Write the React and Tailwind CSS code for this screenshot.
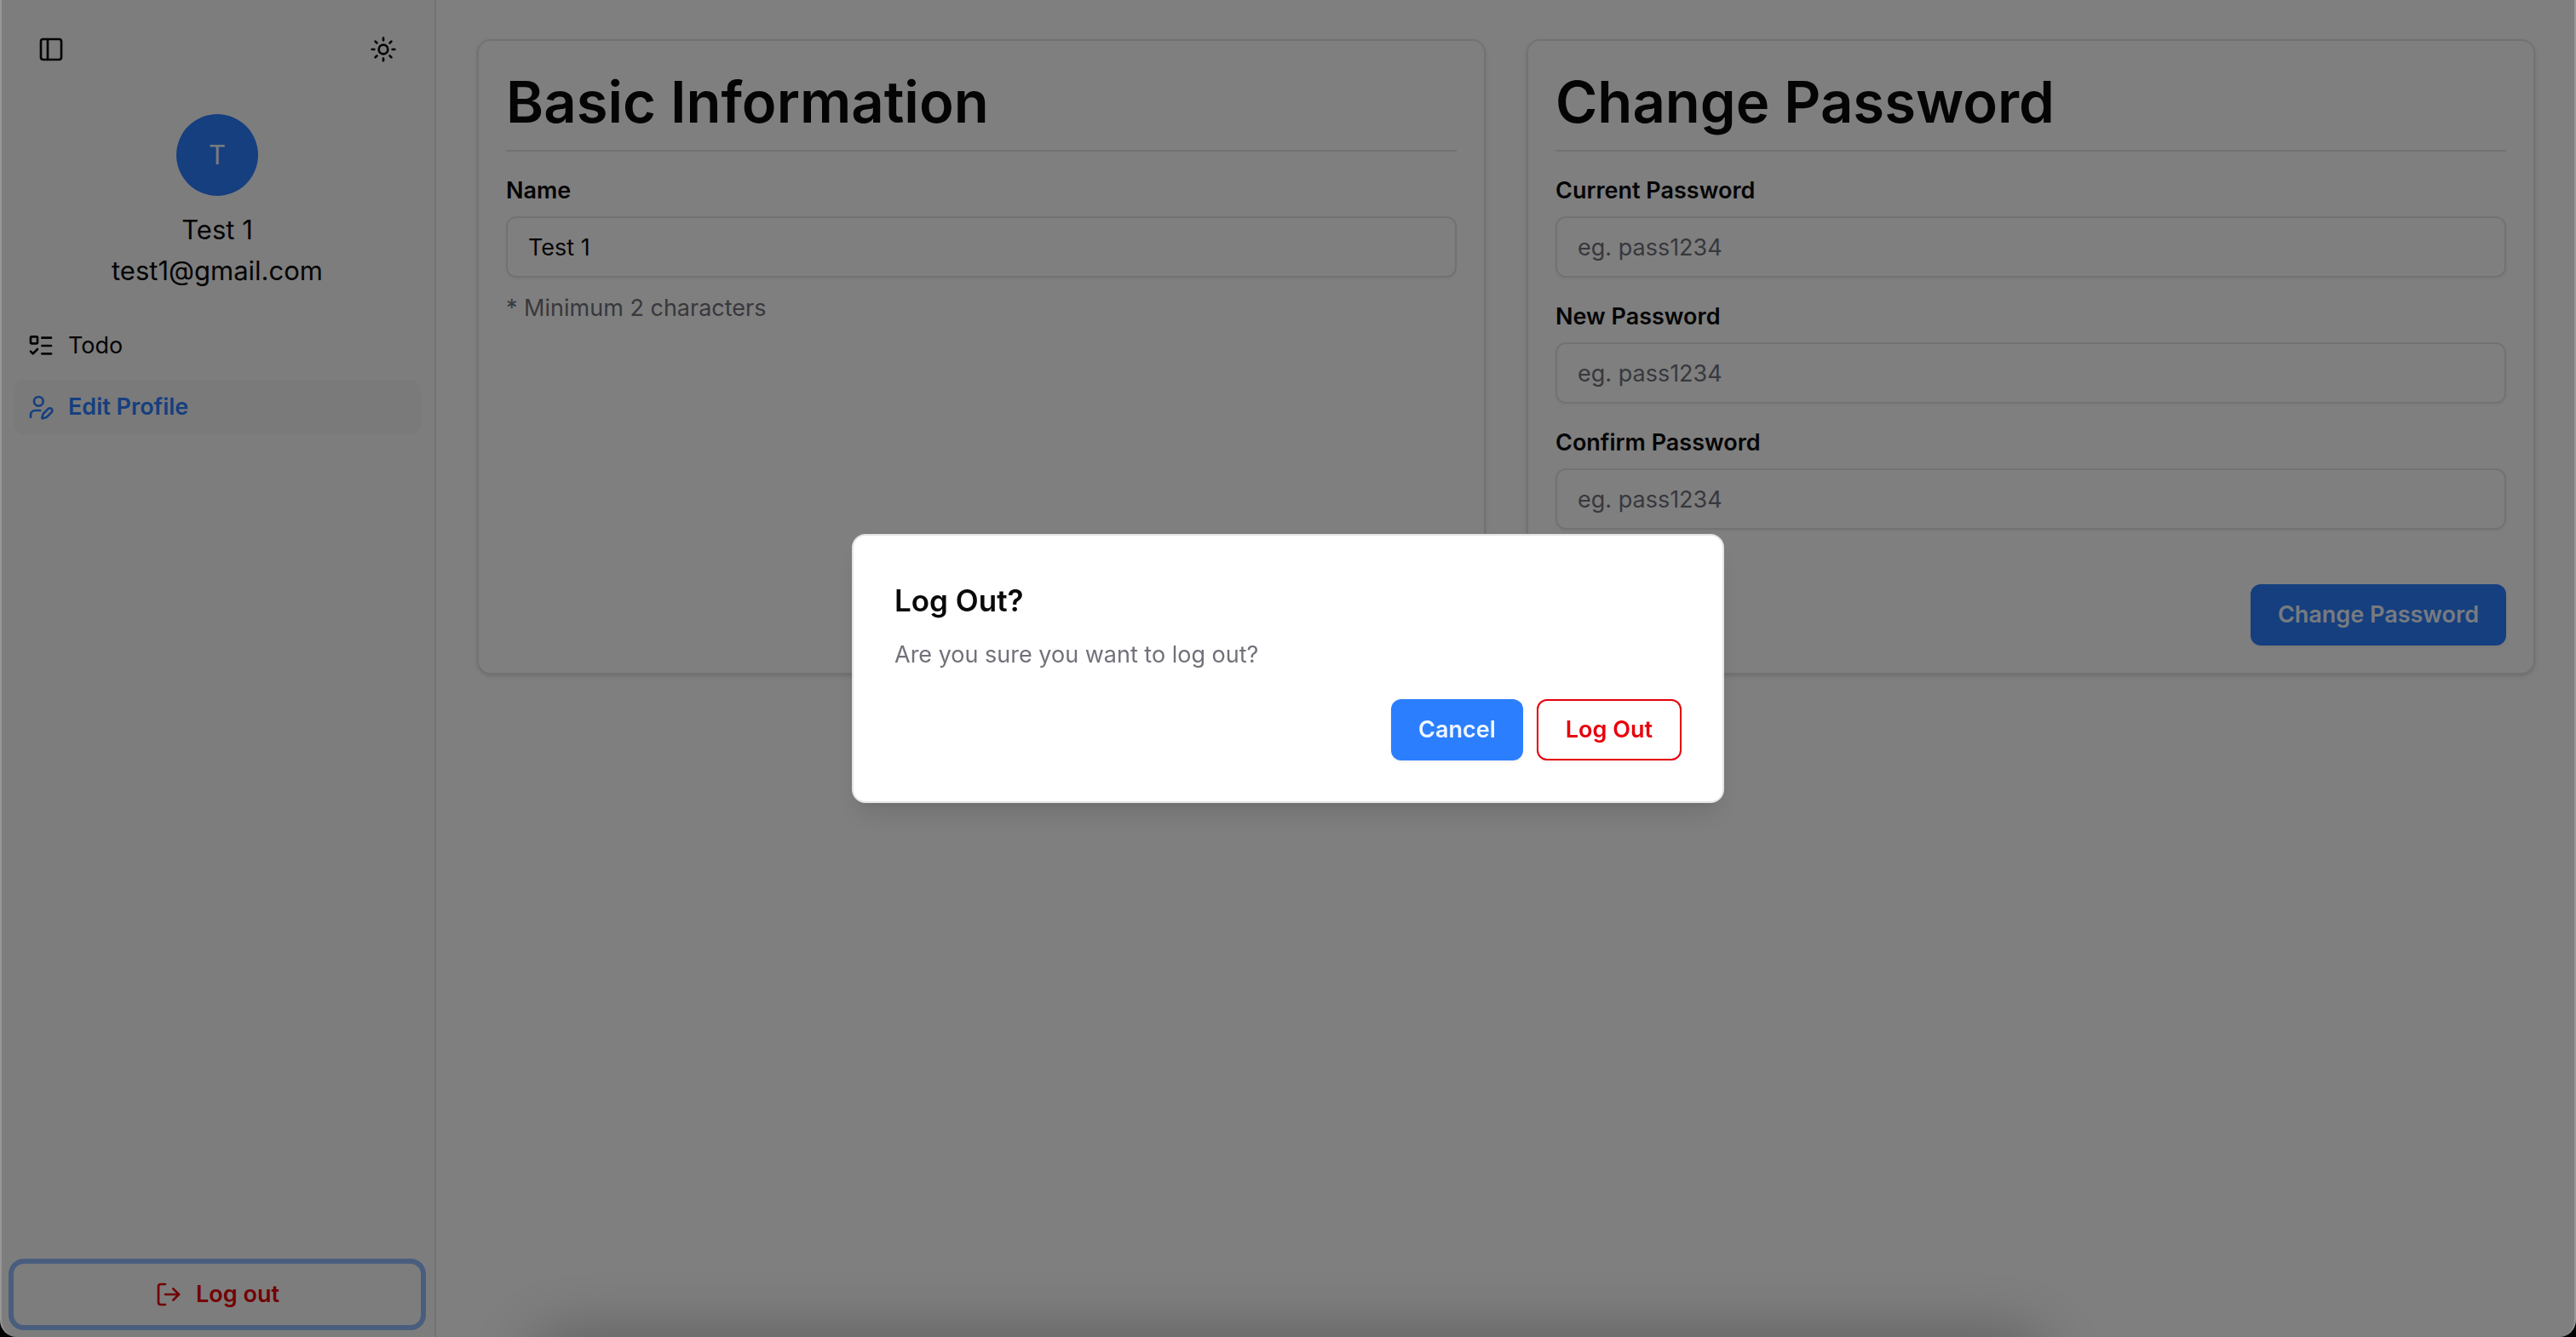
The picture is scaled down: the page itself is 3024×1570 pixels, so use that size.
import { ListTodo, LogOut, PanelLeft, Sun, UserPen } from "lucide-react";

const buttonBase =
  "flex h-[72px] items-center justify-center rounded-[12px] text-[27px] font-semibold shadow-[0_2px_4px_rgba(0,0,0,0.05)]";

function Sidebar() {
  return (
    <aside className="flex w-[512px] shrink-0 flex-col border-r-2 border-zinc-200 bg-neutral-50 px-4 pb-[14px] pt-[26px]">
      <div className="flex items-center justify-between px-3">
        <button type="button" aria-label="Toggle sidebar" className="flex size-16 items-center justify-center">
          <PanelLeft className="size-8" />
        </button>
        <button type="button" aria-label="Toggle theme" className="flex size-16 items-center justify-center">
          <Sun className="size-8" />
        </button>
      </div>

      <div className="mt-11 flex flex-col items-center text-[31px] leading-[48px]">
        <div className="mb-4 flex size-24 items-center justify-center rounded-full bg-[#2b7fff] text-blue-50">T</div>
        <p>Test 1</p>
        <p>test1@gmail.com</p>
      </div>

      <nav className="mt-8 flex flex-col gap-2 text-[27px]">
        <a href="#todo" className="flex h-16 items-center gap-4 rounded-[12px] px-4">
          <ListTodo className="size-8" />
          Todo
        </a>
        <a href="#profile" className="flex h-16 items-center gap-4 rounded-[12px] bg-zinc-100 px-4 font-semibold text-[#2b7fff]">
          <UserPen className="size-8" />
          Edit Profile
        </a>
      </nav>

      <button
        type="button"
        className="mt-auto flex h-[72px] items-center justify-center gap-4 rounded-[12px] text-[27px] font-semibold text-[#e7000b] ring-6 ring-[#2b7fff]/50"
      >
        <LogOut className="size-8" />
        Log out
      </button>
    </aside>
  );
}

function Card({ title, children }) {
  return (
    <section className="flex flex-1 flex-col gap-8 rounded-[16px] border-2 border-zinc-200 bg-white p-8 shadow-[0_2px_6px_rgba(0,0,0,0.1),0_2px_4px_-2px_rgba(0,0,0,0.1)]">
      <h1 className="border-b-2 border-zinc-200 pb-4 text-[67px] font-semibold leading-[80px]">{title}</h1>
      {children}
    </section>
  );
}

function Field({ id, label, hint, ...inputProps }) {
  return (
    <div className="flex flex-col gap-4">
      <label htmlFor={id} className="text-[27px] font-semibold leading-[28px]">
        {label}
      </label>
      <input
        id={id}
        className="h-[72px] w-full rounded-[12px] border-2 border-zinc-200 px-6 text-[27px] shadow-[0_2px_4px_rgba(0,0,0,0.05)] outline-none placeholder:text-[#71717b]"
        {...inputProps}
      />
      {hint && <p className="text-[27px] leading-[40px] text-[#71717b]">{hint}</p>}
    </div>
  );
}

function LogOutDialog() {
  return (
    <div className="fixed inset-0 flex items-center justify-center bg-black/50">
      <div
        role="alertdialog"
        aria-labelledby="dialog-title"
        aria-describedby="dialog-text"
        className="flex w-full max-w-[1024px] flex-col gap-8 rounded-[16px] border-2 border-zinc-200 bg-white p-12 shadow-[0_20px_30px_-6px_rgba(0,0,0,0.1),0_8px_12px_-8px_rgba(0,0,0,0.1)]"
      >
        <div className="flex flex-col gap-4">
          <h2 id="dialog-title" className="text-[35px] font-semibold leading-[56px]">
            Log Out?
          </h2>
          <p id="dialog-text" className="text-[27px] leading-[40px] text-[#71717b]">
            Are you sure you want to log out?
          </p>
        </div>
        <div className="flex justify-end gap-4">
          <button type="button" className={`${buttonBase} bg-[#2b7fff] px-8 text-blue-50`}>
            Cancel
          </button>
          <button type="button" className={`${buttonBase} border-2 border-[#e7000b] bg-white px-8 text-[#e7000b]`}>
            Log Out
          </button>
        </div>
      </div>
    </div>
  );
}

// Window edge: thin light sides, rounded bottom corners and the dock's soft shadow.
function WindowFrame() {
  return (
    <div aria-hidden="true" className="pointer-events-none fixed inset-0 overflow-hidden">
      <div className="absolute inset-x-0 top-full mx-auto h-20 w-[59%] rounded-[40px] shadow-[0_0_80px_rgba(0,0,0,0.3)]" />
      <div className="absolute inset-0 rounded-b-[20px] border-x-2 border-white/20 shadow-[0_0_0_20px_black]" />
    </div>
  );
}

export default function App() {
  return (
    <div className="font-['Inter',sans-serif] text-zinc-950">
      <div className="flex min-h-screen bg-white">
        <Sidebar />
        <main className="flex flex-1 items-start px-12 pt-[46px]">
          <div className="flex flex-1 items-stretch gap-12">
            <Card title="Basic Information">
              <Field id="name" label="Name" defaultValue="Test 1" hint="* Minimum 2 characters" />
            </Card>
            <Card title="Change Password">
              <Field id="current" label="Current Password" placeholder="eg. pass1234" />
              <Field id="new" label="New Password" placeholder="eg. pass1234" />
              <Field id="confirm" label="Confirm Password" placeholder="eg. pass1234" />
              <button type="button" className={`${buttonBase} mt-8 self-end bg-[#2b7fff] px-8 text-blue-50`}>
                Change Password
              </button>
            </Card>
          </div>
        </main>
      </div>
      <LogOutDialog />
      <WindowFrame />
    </div>
  );
}
